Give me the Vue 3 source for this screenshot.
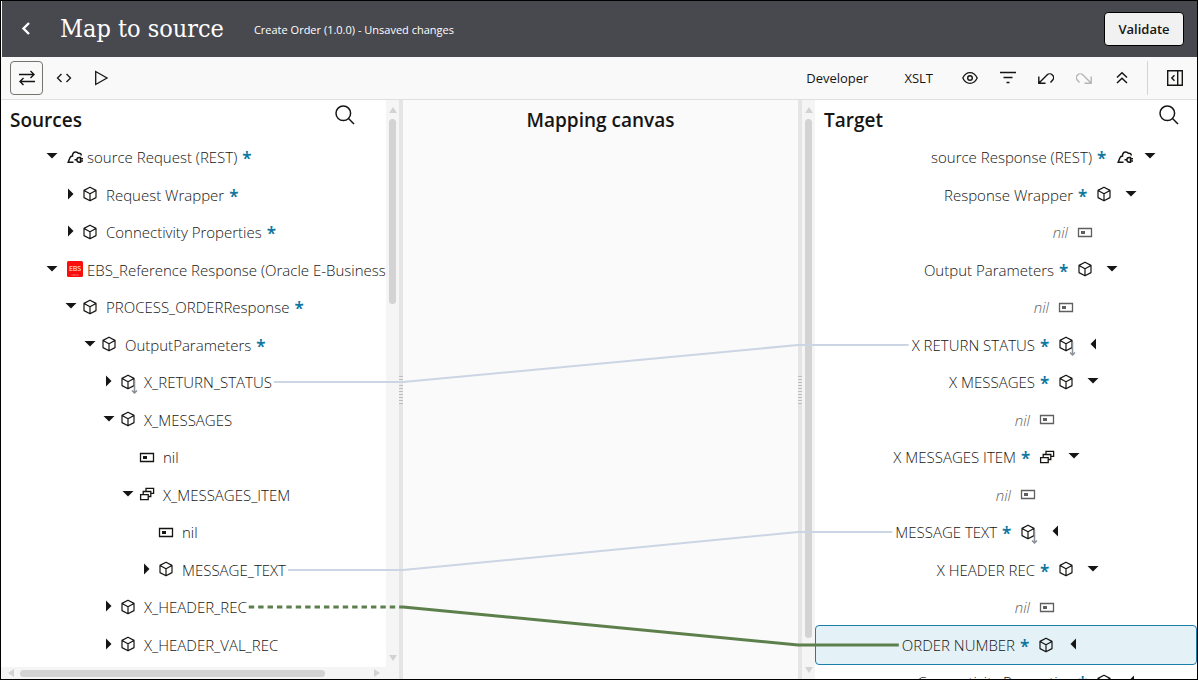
<template>
  <div class="mapper">
    <svg class="sprite" aria-hidden="true">
      <symbol id="i-cube" viewBox="0 0 16 16">
        <path d="M8 1.2 14 4.4v7.2L8 14.8 2 11.6V4.4zM2 4.4l6 3.4 6-3.4M8 7.8v7" fill="none" stroke="currentColor" stroke-width="1.2" stroke-linejoin="round" />
      </symbol>
      <symbol id="i-cloud" viewBox="0 0 16 16">
        <path d="M6.500 13.300H1.200L2.800 9C3.400 7.600 4.300 7 5.500 7c-.2-2.200 1-4 3.200-4 1.200 0 2 .4 2.600 1.200 1.800-.3 3 .8 3 2.300" fill="none" stroke="currentColor" stroke-width="1.500" />
        <path d="M7.500 10.800h2.300M13.500 8.500h-1.300a2.300 2.300 0 0 0 0 4.700h1.300zM13.500 9.700H16M13.500 12h2.500" fill="none" stroke="currentColor" stroke-width="1.500" />
      </symbol>
      <symbol id="i-ebs" viewBox="0 0 16 16">
        <rect width="16" height="16" rx="1.500" fill="#f90d0d" />
        <text x="8" y="10" text-anchor="middle" font-size="7" font-weight="500" fill="#fff">EBS</text>
        <path d="M4.500 14h7" stroke="#fff" stroke-width=".8" stroke-dasharray="1 .3" opacity=".7" />
      </symbol>
      <symbol id="i-attr" viewBox="0 0 16 16">
        <path d="M1.500 4.500h13v8h-13z" fill="none" stroke="currentColor" stroke-width="1.300" />
        <path d="M4 7h4v3H4z" fill="currentColor" />
      </symbol>
      <symbol id="i-stack" viewBox="0 0 16 16">
        <path d="M1.600 8.600h7.600v5H1.600zM4.200 8.400V5.500h7.600v5H9.400M7 5.300V2.400h7.600v5H12" fill="none" stroke="currentColor" stroke-width="1.300" />
      </symbol>
      <symbol id="i-down" viewBox="0 0 16 16"><path d="M2.500 4h11L8 9.500z" fill="currentColor" /></symbol>
      <symbol id="i-right" viewBox="0 0 16 16"><path d="M5 1.500v11L10.500 7z" fill="currentColor" /></symbol>
      <symbol id="i-left" viewBox="0 0 16 16"><path d="M11 1.500v11L5.500 7z" fill="currentColor" /></symbol>
      <symbol id="i-search" viewBox="0 0 20 20">
        <path d="M8.300 1a7.300 7.300 0 1 1 0 14.600A7.300 7.300 0 0 1 8.300 1zM13.500 13.500l5.500 5.500" fill="none" stroke="currentColor" stroke-width="1.500" />
      </symbol>
    </svg>

    <header class="topbar">
      <button type="button" class="back" aria-label="Back">
        <svg width="10" height="14" viewBox="0 0 10 14"><path d="M8 1 2.500 6.500 8 12" fill="none" stroke="currentColor" stroke-width="2.400" /></svg>
      </button>
      <h1>Map to source</h1>
      <span class="subtitle">Create Order (1.0.0) - Unsaved changes</span>
      <button type="button" class="validate">Validate</button>
    </header>

    <div class="toolbar">
      <div class="modes">
        <button type="button" class="tool active" aria-label="Mapper view">
          <svg width="16" height="16" viewBox="0 0 16 16"><path d="M0 4.500h15M11.500 1 15 4.500 11.500 8M16 11.500H1M4.500 8 1 11.500 4.500 15" fill="none" stroke="currentColor" stroke-width="1.400" /></svg>
        </button>
        <button type="button" class="tool" aria-label="Code">
          <svg width="16" height="16" viewBox="0 0 16 16"><path d="M5.500 4 1.500 8l4 4M10.500 4l4 4-4 4" fill="none" stroke="currentColor" stroke-width="1.300" /></svg>
        </button>
        <button type="button" class="tool" aria-label="Test">
          <svg width="16" height="16" viewBox="0 0 16 16"><path d="M2.700 1.500v13L14 8z" fill="none" stroke="currentColor" stroke-width="1.300" /></svg>
        </button>
      </div>
      <div class="actions">
        <button type="button" class="text-tool">Developer</button>
        <button type="button" class="text-tool">XSLT</button>
        <div class="icons">
          <button type="button" class="tool" aria-label="View">
            <svg width="16" height="16" viewBox="0 0 16 16"><path d="M.8 8C2.500 4.500 5 2.700 8 2.700S13.500 4.500 15.200 8c-1.700 3.500-4.200 5.300-7.200 5.300S2.500 11.500.8 8z" fill="none" stroke="currentColor" stroke-width="1.300" /><circle cx="8" cy="8" r="2.300" fill="none" stroke="currentColor" stroke-width="1.400" /></svg>
          </button>
          <button type="button" class="tool" aria-label="Filter">
            <svg width="16" height="16" viewBox="0 0 16 16"><path d="M0 2.500h16M3.500 7.500h9M6.500 12.500h3" fill="none" stroke="currentColor" stroke-width="1.300" /></svg>
          </button>
          <button type="button" class="tool" aria-label="Undo">
            <svg width="16" height="16" viewBox="0 0 16 16"><path d="M.8 6.500v6.700h6.700M1 13l8-8a3.800 3.800 0 0 1 5.500 5.300L12.500 12.500" fill="none" stroke="currentColor" stroke-width="1.400" /></svg>
          </button>
          <button type="button" class="tool" aria-label="Redo" disabled>
            <svg width="16" height="16" viewBox="0 0 16 16"><path d="M15.200 6.500v6.700H8.500M15 13 7 5a3.800 3.800 0 0 0-5.500 5.300L3.500 12.500" fill="none" stroke="currentColor" stroke-width="1.400" /></svg>
          </button>
          <button type="button" class="tool" aria-label="Collapse header">
            <svg width="16" height="16" viewBox="0 0 16 16"><path d="M3 7.500l5-4.700 5 4.700M3 13l5-4.700 5 4.700" fill="none" stroke="currentColor" stroke-width="1.500" /></svg>
          </button>
        </div>
        <button type="button" class="tool panel-toggle" aria-label="Open panel">
          <svg width="16" height="16" viewBox="0 0 16 16"><path d="M.7.700h14.600v14.600H.7zM10.700.700v14.600M7.500 5.300 4.800 8l2.700 2.700" fill="none" stroke="currentColor" stroke-width="1.400" /></svg>
        </button>
      </div>
    </div>

    <main ref="board" class="board">
      <section class="panel">
        <div class="content">
          <div class="panel-head source-head">
            <h2>Sources</h2>
            <button type="button" class="search" aria-label="Search sources"><svg width="20" height="20"><use href="#i-search" /></svg></button>
          </div>
          <ul class="tree">
            <li v-for="node in sources" :key="node.id" :class="['row', { root: node.level === 0 }]" :style="{ paddingLeft: 43 + node.level * 19 + 'px' }">
              <button v-if="node.caret" type="button" class="caret" aria-label="Toggle"><svg width="16" height="16"><use :href="'#i-' + node.caret" /></svg></button>
              <span v-else class="caret"></span>
              <span class="icon">
                <svg width="16" height="16"><use :href="'#i-' + node.icon" /></svg>
                <svg v-if="node.repeat" class="arrow" width="7" height="14" viewBox="0 0 7 14"><path d="M3.500 0v12M1 10.500l2.500 2.500L6 10.500" fill="none" stroke="#8a9097" stroke-width="1.500" /></svg>
              </span>
              <span class="label" :data-node="node.id">{{ node.label }}</span>
              <span v-if="node.required" class="required">*</span>
            </li>
          </ul>
        </div>
        <div class="scroll vertical" aria-hidden="true">
          <i class="end up"></i>
          <div class="track"><div class="thumb" :style="{ height: '35%' }"></div></div>
          <i class="end down"></i>
        </div>
        <div class="scroll horizontal" aria-hidden="true">
          <i class="end back-end"></i>
          <div class="track"><div class="thumb" :style="{ width: '88%' }"></div></div>
          <i class="end forward"></i>
        </div>
        <div class="corner"></div>
      </section>

      <div class="splitter"></div>

      <section class="canvas">
        <h2>Mapping canvas</h2>
      </section>

      <div class="splitter"></div>

      <section class="panel target">
        <div class="scroll vertical" aria-hidden="true">
          <i class="end up"></i>
          <div class="track"><div class="thumb" :style="{ height: '96%' }"></div></div>
          <i class="end down"></i>
        </div>
        <div class="content">
          <div class="panel-head">
            <h2>Target</h2>
            <button type="button" class="search" aria-label="Search target"><svg width="20" height="20"><use href="#i-search" /></svg></button>
          </div>
          <ul class="tree">
            <li v-for="node in targets" :key="node.id" :class="['row', { root: node.level === 0, muted: node.icon === 'attr', selected: node.id === selected }]" :style="{ paddingRight: 39 + node.level * 19 + 'px' }">
              <button v-if="node.caret" type="button" class="caret" aria-label="Toggle"><svg width="16" height="16"><use :href="'#i-' + node.caret" /></svg></button>
              <span v-else class="caret"></span>
              <span class="icon">
                <svg width="16" height="16"><use :href="'#i-' + node.icon" /></svg>
                <svg v-if="node.repeat" class="arrow" width="7" height="14" viewBox="0 0 7 14"><path d="M3.500 0v12M1 10.500l2.500 2.500L6 10.500" fill="none" stroke="#8a9097" stroke-width="1.500" /></svg>
              </span>
              <span v-if="node.required" class="required">*</span>
              <span class="label" :data-node="node.id" @click="selected = node.id">{{ node.label }}</span>
            </li>
          </ul>
        </div>
      </section>

      <svg class="links" aria-hidden="true">
        <g v-for="line in lines" :key="line.from" :class="{ current: line.to === selected }">
          <path class="lead" :d="line.lead" :stroke-dasharray="line.dashed ? '5.4 4' : null" />
          <path :d="line.rest" />
        </g>
      </svg>
    </main>
  </div>
</template>

<script setup>
import { ref, onMounted, onBeforeUnmount } from 'vue'

const sources = [
  { id: 's1', level: 0, caret: 'down', icon: 'cloud', label: 'source Request (REST)', required: true },
  { id: 's2', level: 1, caret: 'right', icon: 'cube', label: 'Request Wrapper', required: true },
  { id: 's3', level: 1, caret: 'right', icon: 'cube', label: 'Connectivity Properties', required: true },
  { id: 's4', level: 0, caret: 'down', icon: 'ebs', label: 'EBS_Reference Response (Oracle E-Business' },
  { id: 's5', level: 1, caret: 'down', icon: 'cube', label: 'PROCESS_ORDERResponse', required: true },
  { id: 's6', level: 2, caret: 'down', icon: 'cube', label: 'OutputParameters', required: true },
  { id: 's7', level: 3, caret: 'right', icon: 'cube', label: 'X_RETURN_STATUS', repeat: true },
  { id: 's8', level: 3, caret: 'down', icon: 'cube', label: 'X_MESSAGES' },
  { id: 's9', level: 4, icon: 'attr', label: 'nil' },
  { id: 's10', level: 4, caret: 'down', icon: 'stack', label: 'X_MESSAGES_ITEM' },
  { id: 's11', level: 5, icon: 'attr', label: 'nil' },
  { id: 's12', level: 5, caret: 'right', icon: 'cube', label: 'MESSAGE_TEXT' },
  { id: 's13', level: 3, caret: 'right', icon: 'cube', label: 'X_HEADER_REC' },
  { id: 's14', level: 3, caret: 'right', icon: 'cube', label: 'X_HEADER_VAL_REC' }
]

const targets = [
  { id: 't1', level: 0, caret: 'down', icon: 'cloud', label: 'source Response (REST)', required: true },
  { id: 't2', level: 1, caret: 'down', icon: 'cube', label: 'Response Wrapper', required: true },
  { id: 't3', level: 2, icon: 'attr', label: 'nil' },
  { id: 't4', level: 2, caret: 'down', icon: 'cube', label: 'Output Parameters', required: true },
  { id: 't5', level: 3, icon: 'attr', label: 'nil' },
  { id: 't6', level: 3, caret: 'left', icon: 'cube', label: 'X RETURN STATUS', required: true, repeat: true },
  { id: 't7', level: 3, caret: 'down', icon: 'cube', label: 'X MESSAGES', required: true },
  { id: 't8', level: 4, icon: 'attr', label: 'nil' },
  { id: 't9', level: 4, caret: 'down', icon: 'stack', label: 'X MESSAGES ITEM', required: true },
  { id: 't10', level: 5, icon: 'attr', label: 'nil' },
  { id: 't11', level: 5, caret: 'left', icon: 'cube', label: 'MESSAGE TEXT', required: true, repeat: true },
  { id: 't12', level: 3, caret: 'down', icon: 'cube', label: 'X HEADER REC', required: true },
  { id: 't13', level: 4, icon: 'attr', label: 'nil' },
  { id: 't14', level: 4, caret: 'left', icon: 'cube', label: 'ORDER NUMBER', required: true },
  { id: 't15', level: 1, caret: 'left', icon: 'cube', label: 'Connectivity Properties', required: true }
]

const mappings = [
  { from: 's7', to: 't6' },
  { from: 's12', to: 't11' },
  { from: 's13', to: 't14', dashed: true }
]

const selected = ref('t14')
const board = ref(null)
const lines = ref([])

// each link runs flat to the canvas edge, crosses it, then runs flat to its target
function drawLinks() {
  const base = board.value.getBoundingClientRect()
  const canvas = board.value.querySelector('.canvas').getBoundingClientRect()
  const left = canvas.left - base.left
  const right = canvas.right - base.left
  const find = id => board.value.querySelector(`[data-node="${id}"]`).getBoundingClientRect()

  lines.value = mappings.map(item => {
    const a = find(item.from)
    const b = find(item.to)
    const y1 = Math.round(a.top + a.height / 2 - base.top)
    const y2 = Math.round(b.top + b.height / 2 - base.top)
    return {
      ...item,
      lead: `M${a.right - base.left + 2} ${y1}H${left}`,
      rest: `M${left} ${y1}L${right} ${y2}H${b.left - base.left - 3}`
    }
  })
}

onMounted(() => {
  drawLinks()
  window.addEventListener('resize', drawLinks)
})

onBeforeUnmount(() => {
  window.removeEventListener('resize', drawLinks)
})
</script>

<style>
body {
  margin: 0;
}
</style>

<style scoped>
.mapper {
  box-sizing: border-box;
  height: 100vh;
  display: flex;
  flex-direction: column;
  border: 1px solid #000000;
  background: #ffffff;
  color: #161513;
  font-family: "Open Sans", "Noto Sans", sans-serif;
  font-size: 15px;
  overflow: hidden;
}

.sprite {
  position: absolute;
  width: 0;
  height: 0;
}

button {
  margin: 0;
  padding: 0;
  border: none;
  background: none;
  color: inherit;
  font: inherit;
  cursor: pointer;
}

svg {
  display: block;
}

h1,
h2 {
  margin: 0;
}

h2 {
  font-size: 19px;
  font-weight: 600;
  line-height: 40px;
}

.topbar {
  flex: none;
  display: flex;
  align-items: center;
  height: 56px;
  margin-left: 1px;
  padding: 0 13px 0 19px;
  background: #48484f;
  color: #ffffff;
}

.back {
  width: 10px;
}

h1 {
  margin-left: 29px;
  font-family: "DejaVu Serif Condensed", "DejaVu Serif", serif;
  font-size: 25px;
  font-weight: 400;
  line-height: 40px;
}

.subtitle {
  margin-left: 30px;
  font-size: 11px;
  font-weight: 500;
}

.validate {
  margin-left: auto;
  width: 80px;
  height: 34px;
  border: 1px solid #000000;
  border-radius: 4px;
  background: #f1f1f1;
  color: #161513;
  font-size: 13px;
  font-weight: 600;
}

.toolbar {
  flex: none;
  display: flex;
  justify-content: space-between;
  height: 42px;
  padding: 0 5px 0 9px;
  border-bottom: 1px solid #e0e0e0;
  background: #f9f9f9;
}

.modes,
.actions,
.icons {
  display: flex;
  align-items: center;
}

.modes {
  gap: 4px;
}

.tool {
  box-sizing: border-box;
  width: 34px;
  height: 34px;
  display: flex;
  align-items: center;
  justify-content: center;
}

.modes .tool {
  width: 33px;
}

.tool:disabled {
  color: #b5b5b5;
}

.tool.active {
  border: 1px solid #75756f;
  border-radius: 4px;
}

.text-tool {
  margin-right: 36px;
  font-size: 13px;
}

.icons {
  gap: 4px;
  margin-left: -16px;
  padding-right: 8px;
  border-right: 1px solid #d5d5d5;
}

.panel-toggle {
  margin-left: 10px;
}

.board {
  position: relative;
  flex: 1;
  min-height: 0;
  display: grid;
  grid-template-columns: 398fr 4px 395fr 4px 395fr;
}

.panel {
  min-width: 0;
  min-height: 0;
  display: grid;
  grid-template-columns: minmax(0, 1fr) 13px;
  grid-template-rows: minmax(0, 1fr) 12px;
}

.panel.target {
  grid-template-columns: 13px minmax(0, 1fr);
  grid-template-rows: minmax(0, 1fr);
}

.content {
  min-width: 0;
  overflow: hidden;
}

.panel-head {
  display: flex;
  justify-content: space-between;
  align-items: flex-start;
  height: 38px;
  padding: 0 18px 0 9px;
}

.source-head {
  padding-right: 31px;
}

.search {
  padding: 5px 0;
}

.tree {
  margin: 0;
  padding: 0;
  list-style: none;
}

.row {
  box-sizing: border-box;
  display: flex;
  align-items: center;
  height: 38px;
  line-height: 20px;
  font-weight: 360;
  white-space: nowrap;
}

.row:nth-child(even) {
  height: 37px;
}

.target .row {
  flex-direction: row-reverse;
}

.caret {
  flex: none;
  width: 16px;
  height: 16px;
}

.icon {
  position: relative;
  flex: none;
  box-sizing: border-box;
  width: 27px;
  padding: 0 3px 1px;
}

.root .icon {
  padding-left: 7px;
}

.target .icon {
  width: 36px;
  padding-left: 9px;
}

.target .root .icon {
  padding-left: 11px;
}

.arrow {
  position: absolute;
  right: 6px;
  top: 6px;
}

.target .arrow {
  right: 9px;
}

.required {
  width: 9px;
  margin: 4px 0 0 5px;
  color: #0f76a0;
  font-family: "Noto Sans", sans-serif;
  font-size: 17px;
  font-weight: 600;
  line-height: 20px;
}

.muted {
  color: #5f5f5f;
  font-style: italic;
}

.selected {
  border: 1px solid #1b7ea8;
  border-radius: 4px;
  background: #e4f1f7;
}

.row.selected {
  height: 40px;
  margin: -1px 0 -2px;
}

.scroll {
  display: flex;
  background: #f5f5f5;
}

.vertical {
  flex-direction: column;
}

.track {
  flex: 1;
  min-height: 0;
  min-width: 0;
}

.vertical .track {
  padding: 0 3px;
}

.horizontal .track {
  padding: 3px 0 2px;
}

.thumb {
  height: 100%;
  border-radius: 4px;
  background: #d3d3d3;
}

.end {
  flex: none;
  display: flex;
  align-items: center;
  justify-content: center;
}

.vertical .end {
  height: 19px;
}

.horizontal .end {
  width: 19px;
}

.end::before {
  content: "";
  border: 4px solid transparent;
}

.up::before {
  border-top: none;
  border-bottom: 6px solid #d3d3d3;
}

.down::before {
  border-bottom: none;
  border-top: 6px solid #d3d3d3;
}

.back-end::before {
  border-left: none;
  border-right: 6px solid #d3d3d3;
}

.forward::before {
  border-right: none;
  border-left: 6px solid #d3d3d3;
}

.corner {
  background: #f5f5f5;
}

.splitter {
  display: flex;
  align-items: center;
  background: #e5e5e5;
}

.splitter::before {
  content: "";
  width: 4px;
  height: 28px;
  background: repeating-linear-gradient(#bdbdbd 0 1px, #ececec 1px 3px);
}

.canvas {
  background: #fafafa;
  text-align: center;
}

.links {
  position: absolute;
  inset: 0;
  width: 100%;
  height: 100%;
  pointer-events: none;
}

.links path {
  fill: none;
  stroke: #cbd5e3;
  stroke-width: 2;
}

.links .current path {
  stroke: #5d7f4c;
  stroke-width: 3;
}
</style>
